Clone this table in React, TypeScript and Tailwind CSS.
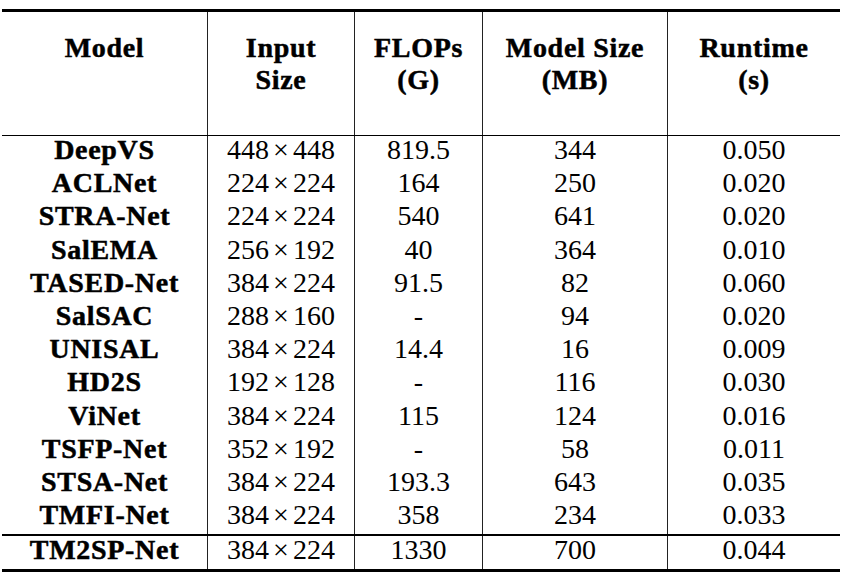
const rows = [
  ['DeepVS', '448', '448', '819.5', '344', '0.050'],
  ['ACLNet', '224', '224', '164', '250', '0.020'],
  ['STRA-Net', '224', '224', '540', '641', '0.020'],
  ['SalEMA', '256', '192', '40', '364', '0.010'],
  ['TASED-Net', '384', '224', '91.5', '82', '0.060'],
  ['SalSAC', '288', '160', '-', '94', '0.020'],
  ['UNISAL', '384', '224', '14.4', '16', '0.009'],
  ['HD2S', '192', '128', '-', '116', '0.030'],
  ['ViNet', '384', '224', '115', '124', '0.016'],
  ['TSFP-Net', '352', '192', '-', '58', '0.011'],
  ['STSA-Net', '384', '224', '193.3', '643', '0.035'],
  ['TMFI-Net', '384', '224', '358', '234', '0.033'],
]

const cols = 'grid grid-cols-[205px_147px_128px_185px_173px]'
const cell = 'border-l border-[#222] text-center'
const heavy = 'font-bold tracking-[0.7px] [-webkit-text-stroke:0.5px_black]'

function Row({ r, h }: { r: string[]; h: string }) {
  return (
    <div className={`${cols} ${h} leading-[27px]`}>
      <div className={`text-center ${heavy}`}>{r[0]}</div>
      <div className={cell}>
        {r[1]}
        <span className="mx-[4px]">×</span>
        {r[2]}
      </div>
      <div className={cell}>{r[3]}</div>
      <div className={cell}>{r[4]}</div>
      <div className={cell}>{r[5]}</div>
    </div>
  )
}

export default function App() {
  return (
    <div
      className="w-[846px] h-[578px] bg-white pt-[9px] pl-[2px] text-black text-[28px]"
      style={{ fontFamily: '"Liberation Serif", "Times New Roman", serif' }}
    >
      <div className="w-[838px] border-t-[3px] border-b-[3px] border-black">
        <div className={`${cols} h-[124px] border-b border-black leading-[32px] ${heavy}`}>
          <div className="text-center pt-[20px]">Model</div>
          <div className={`${cell} pt-[20px]`}>
            Input
            <br />
            Size
          </div>
          <div className={`${cell} pt-[20px]`}>
            FLOPs
            <br />
            (G)
          </div>
          <div className={`${cell} pt-[20px]`}>
            Model Size
            <br />
            (MB)
          </div>
          <div className={`${cell} pt-[20px]`}>
            Runtime
            <br />
            (s)
          </div>
        </div>
        {rows.map((r) => (
          <Row key={r[0]} r={r} h="h-[33.2px]" />
        ))}
        <div className="border-t-2 border-black">
          <Row r={['TM2SP-Net', '384', '224', '1330', '700', '0.044']} h="h-[33px]" />
        </div>
      </div>
    </div>
  )
}
